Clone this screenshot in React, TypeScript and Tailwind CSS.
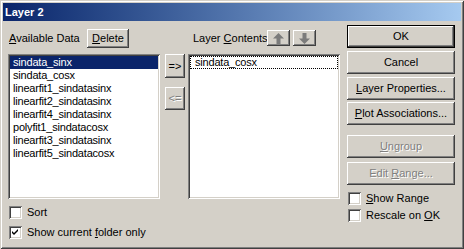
import React from "react";

const RAISED =
  "shadow-[inset_-1px_-1px_#404040,inset_1px_1px_#ffffff,inset_-2px_-2px_#808080,inset_2px_2px_#d4d0c8]";
const SUNKEN =
  "shadow-[inset_1px_1px_#808080,inset_-1px_-1px_#ffffff,inset_2px_2px_#404040,inset_-2px_-2px_#d4d0c8]";
const DISABLED = "text-[#808080] [text-shadow:1px_1px_#ffffff]";

const AVAILABLE = [
  "sindata_sinx",
  "sindata_cosx",
  "linearfit1_sindatasinx",
  "linearfit2_sindatasinx",
  "linearfit4_sindatasinx",
  "polyfit1_sindatacosx",
  "linearfit3_sindatasinx",
  "linearfit5_sindatacosx",
];

function U({ children }: { children: React.ReactNode }) {
  return <span className="underline underline-offset-[1px]">{children}</span>;
}

function Btn({
  children,
  className = "",
  disabled = false,
}: {
  children: React.ReactNode;
  className?: string;
  disabled?: boolean;
}) {
  return (
    <div
      className={`flex items-center justify-center bg-[#d4d0c8] ${RAISED} ${
        disabled ? DISABLED : "text-black"
      } ${className}`}
    >
      <span className="whitespace-nowrap leading-none">{children}</span>
    </div>
  );
}

function Check({ checked, children }: { checked?: boolean; children: React.ReactNode }) {
  return (
    <div className="flex items-center h-[13px]">
      <div className={`w-[13px] h-[13px] bg-white ${SUNKEN} flex items-center justify-center`}>
        {checked && (
          <svg width="7" height="7" viewBox="0 0 7 7">
            <path d="M0 2 L2 4 L6 0 L6 2 L2 6 L0 4 Z" fill="#000" />
          </svg>
        )}
      </div>
      <span className="ml-[5px] leading-none whitespace-nowrap">{children}</span>
    </div>
  );
}

function Arrow({ up }: { up?: boolean }) {
  return (
    <svg width="11" height="11" viewBox="0 0 11 11" className="block">
      <g transform={up ? "" : "rotate(180 5.5 5.5)"}>
        <path d="M5.5 0 L11 5.5 L7.5 5.5 L7.5 11 L3.5 11 L3.5 5.5 L0 5.5 Z" fill="#7b7b7b" />
      </g>
    </svg>
  );
}

export default function App() {
  return (
    <div
      className={`w-[464px] h-[249px] bg-[#d4d0c8] p-[3px] text-[11px] text-black shadow-[inset_1px_1px_#d4d0c8,inset_-1px_-1px_#404040,inset_2px_2px_#ffffff,inset_-2px_-2px_#808080] font-['Liberation_Sans',Arial,sans-serif] select-none`}
    >
      <div className="h-[18px] flex items-center pl-[2px] bg-gradient-to-r from-[#0a246a] to-[#a6caf0]">
        <span className="text-white font-bold text-[11px] leading-none">Layer 2</span>
      </div>

      <div className="flex pl-[5px]">
        {/* left column */}
        <div className="w-[152px] flex flex-col">
          <div className="mt-[8px] h-[19px] flex items-center pl-[1px]">
            <span className="w-[78px] leading-none whitespace-nowrap">
              <U>A</U>vailable Data
            </span>
            <Btn className="w-[42px] h-[19px]">
              <U>D</U>elete
            </Btn>
          </div>
          <div className={`mt-[6px] h-[145px] bg-white p-[2px] ${SUNKEN}`}>
            {AVAILABLE.map((name, i) => (
              <div
                key={name}
                className={`h-[13px] leading-[13px] pl-[3px] whitespace-nowrap tracking-[-0.2px] ${
                  i === 0 ? "bg-[#0a246a] text-white" : ""
                }`}
              >
                {name}
              </div>
            ))}
          </div>
          <div className="mt-[7px] pl-[1px]">
            <Check>Sort</Check>
          </div>
          <div className="mt-[7px] pl-[1px]">
            <Check checked>
              Show current <U>f</U>older only
            </Check>
          </div>
        </div>

        {/* move buttons */}
        <div className="ml-[5px] w-[20px] flex flex-col">
          <Btn className="mt-[33px] h-[24px]">=&gt;</Btn>
          <Btn className="mt-[9px] h-[23px]" disabled>
            &lt;=
          </Btn>
        </div>

        {/* right list */}
        <div className="ml-[3px] w-[152px] flex flex-col">
          <div className="mt-[9px] h-[16px] flex items-center pl-[5px]">
            <span className="w-[74px] leading-none whitespace-nowrap">
              Layer <U>C</U>ontents
            </span>
            <Btn className="w-[23px] h-[16px]">
              <Arrow up />
            </Btn>
            <Btn className="ml-[3px] w-[23px] h-[16px]">
              <Arrow />
            </Btn>
          </div>
          <div className={`mt-[8px] h-[145px] bg-white p-[2px] ${SUNKEN}`}>
            <div className="h-[13px] leading-[11px] pl-[4px] border border-dotted border-black whitespace-nowrap tracking-[-0.2px]">
              sindata_cosx
            </div>
          </div>
        </div>

        {/* action buttons */}
        <div className="ml-[7px] w-[108px] flex flex-col">
          <div className="mt-[4px] h-[23px] border border-black">
            <Btn className="h-full">OK</Btn>
          </div>
          <Btn className="mt-[3px] h-[23px]">Cancel</Btn>
          <Btn className="mt-[3px] h-[23px]">
            <U>L</U>ayer Properties...
          </Btn>
          <Btn className="mt-[2px] h-[23px]">
            <U>P</U>lot Associations...
          </Btn>
          <Btn className="mt-[10px] h-[23px]" disabled>
            <U>U</U>ngroup
          </Btn>
          <Btn className="mt-[4px] h-[23px]" disabled>
            Edit <U>R</U>ange...
          </Btn>
          <div className="mt-[7px] pl-[1px]">
            <Check>
              <U>S</U>how Range
            </Check>
          </div>
          <div className="mt-[4px] pl-[1px]">
            <Check>
              Rescale on <U>O</U>K
            </Check>
          </div>
        </div>
      </div>
    </div>
  );
}
